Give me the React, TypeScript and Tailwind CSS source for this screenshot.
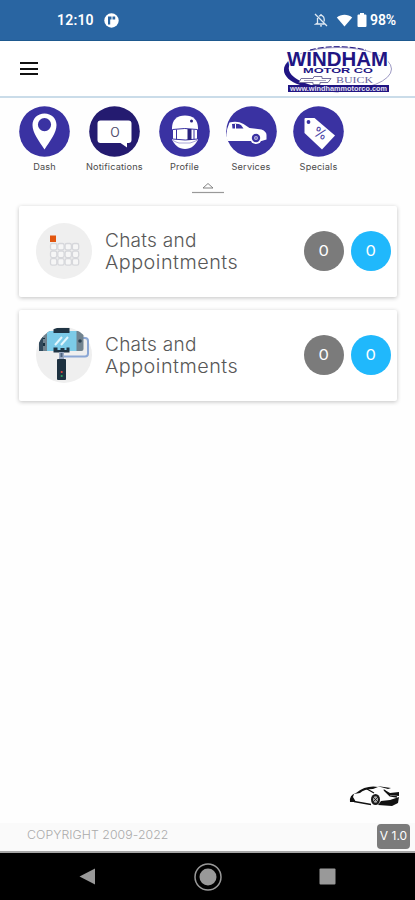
import type { ReactNode } from "react";

const NAVY = "#211583";

function StatusBar() {
  return (
    <div className="flex h-[41px] items-center border-b border-[#1e598f] bg-[#2965a2] pl-[57px] pr-[18px] font-['Roboto',sans-serif] text-white">
      <span className="w-[37px] text-[14px] font-semibold leading-none tracking-[0.2px]">12:10</span>
      <svg className="ml-[10px]" width="15" height="15" viewBox="0 0 15 15">
        <circle cx="7.5" cy="7.5" r="7.2" fill="#fff" />
        <path d="M4 3.500h3.500v3H6.200v5H4zM8.500 3.500h2.700v3H8.500z" fill="#2965a2" />
      </svg>
      <div className="ml-auto flex items-center">
        <svg width="14" height="14" viewBox="0 0 14 14" fill="none" stroke="#dfe9f3" strokeWidth="1.300">
          <path d="M1 1l12 12M3.500 5v5L2 11h8.500M5 3.200C7.500 1.500 10 3 10.200 6v2.500" />
          <path d="M6 12.800h2M7 1v1" />
        </svg>
        <svg className="ml-[8px]" width="17" height="13" viewBox="0 0 17 13">
          <path d="M.8 3.500C5-.2 12-.2 16.200 3.500L8.500 12.500z" fill="#fff" />
        </svg>
        <svg className="ml-[4px]" width="10" height="14" viewBox="0 0 10 14">
          <path d="M3 0h4v1.500h1.500q1 0 1 1V13q0 1-1 1h-7q-1 0-1-1V2.500q0-1 1-1H3z" fill="#fff" />
        </svg>
        <span className="ml-[3px] w-[27px] text-[14px] font-semibold leading-none tracking-[-0.1px]">98%</span>
      </div>
    </div>
  );
}

function DealerLogo() {
  return (
    <svg width="112" height="48" viewBox="0 0 112 48">
      <ellipse cx="56" cy="24" rx="53.500" ry="21.500" fill="#fff" stroke="#9e9ac4" strokeWidth="1" />
      <path d="M8 15C-4 24 3 35 18 40C32 44 46 48 60 47C42 44 20 39 12 32C5 26 5 20 12 15z" fill={NAVY} />
      <path d="M28 5C44 .5 66 .5 84 5" fill="none" stroke={NAVY} strokeWidth="1" strokeDasharray="6 2" />
      <g fontFamily="'Liberation Sans', Arial, sans-serif" fontWeight="700" fill={NAVY}>
        <text x="5" y="20.500" fontSize="19.500" textLength="101" lengthAdjust="spacingAndGlyphs" stroke="#fff" strokeWidth="2" paintOrder="stroke">WINDHAM</text>
        <text x="21" y="28.300" fontSize="7" textLength="70" lengthAdjust="spacingAndGlyphs">MOTOR CO</text>
      </g>
      <path d="M19 33.500h12l1-2h8v2h9l-3 4H38v2h-7v-2H17z" fill="#fff" stroke="#77729d" strokeWidth="1" />
      <path d="M22 35.500h22" stroke="#aaa7c4" />
      <text x="54" y="38" fontFamily="'Liberation Serif', serif" fontSize="9" fill="#64609a" textLength="37" lengthAdjust="spacingAndGlyphs">BUICK</text>
      <rect x="6" y="40" width="101" height="7" fill={NAVY} />
      <text x="8" y="45.500" fontFamily="'Liberation Sans', sans-serif" fontSize="6.500" fontWeight="700" fill="#e4e2f2" textLength="97" lengthAdjust="spacingAndGlyphs">www.windhammotorco.com</text>
    </svg>
  );
}

function Header() {
  return (
    <header className="flex h-[57px] items-center justify-between border-b-2 border-[#cadce9] bg-white pl-5 pr-[21px]">
      <div className="flex w-[18px] flex-col gap-[3.5px]">
        <span className="h-[2px] bg-[#111]" />
        <span className="h-[2px] bg-[#111]" />
        <span className="h-[2px] bg-[#111]" />
      </div>
      <DealerLogo />
    </header>
  );
}

type NavEntry = { label: string; color: string; cell: string; art: ReactNode };

const entries: NavEntry[] = [
  {
    label: "Dash",
    color: "#3a32a2",
    cell: "w-[51px]",
    art: (
      <path fillRule="evenodd" fill="#fff" d="M25.500 7.500C18.500 7.500 13.500 12.500 13.500 19C13.500 27 20 35 25.500 43.500C31 35 37.500 27 37.500 19C37.500 12.500 32.500 7.500 25.500 7.500zM25.500 12a6.600 6.600 0 1 1 0 13.200a6.600 6.600 0 1 1 0-13.200z" />
    ),
  },
  {
    label: "Notifications",
    color: "#241b70",
    cell: "w-[57px]",
    art: (
      <>
        <path fill="#fff" d="M11.500 14.500h28q3 0 3 3v16.500q0 3-3 3H38v4.500L31.500 37h-20q-3 0-3-3V17.500q0-3 3-3z" />
        <text x="21" y="30.500" fontSize="13.500" fontFamily="Inter, sans-serif" fontWeight="300" fill="#4d4968" textLength="10" lengthAdjust="spacingAndGlyphs">0</text>
      </>
    ),
  },
  {
    label: "Profile",
    color: "#3a32a2",
    cell: "w-[51px]",
    art: (
      <>
        <path fill="#fff" d="M13 22C13 14 18 9.500 26 9.500S39 14 39 22v11C37 39 32 43 26 43S15 39 13 33z" />
        <path d="M13 34l4 2 3 1h11l3-1 5-2" fill="none" stroke="#aaa6d8" strokeWidth="1" />
        <path d="M13.500 23.500q12-2 25 0v9.500q-12 2-25 0z" fill="#fff" stroke="#3a32a2" strokeWidth="1" />
        <path d="M17.500 23.500v10M35 23.500v10" stroke="#3a32a2" strokeWidth="1" />
        <path d="M28.500 23h4v11h-4z" fill="#28217d" />
        <circle cx="32.500" cy="15" r="1.500" fill="#28217d" />
      </>
    ),
  },
  {
    label: "Services",
    color: "#3a32a2",
    cell: "w-[51px]",
    art: (
      <>
        <path fill="#fff" d="M3.500 16.500q8-2 14 1.500l6 4 12 1.500q5 2 5 5.500v4.500l-5 1.500H1.500Q-1 26 3.500 16.500z" />
        <path d="M6 18q6-1 9 1l2.500 3.500H6.500z" fill="#3a32a2" />
        <path d="M9.500 18v5" stroke="#fff" />
        <circle cx="30" cy="32" r="6" fill="#fff" />
        <circle cx="30" cy="32" r="4.200" fill="#3a32a2" />
        <circle cx="30" cy="32" r="2" fill="#b9b5df" />
        <circle cx="30" cy="32" r=".8" fill="#3a32a2" />
      </>
    ),
  },
  {
    label: "Specials",
    color: "#3a32a2",
    cell: "w-[51px]",
    art: (
      <>
        <path fill="#fff" d="M12.500 12h9L42 29.500 29 43.500 11.500 27V13q0-1 1-1z" />
        <circle cx="15.500" cy="16" r="1.900" fill="#3a32a2" />
        <text x="27" y="32" transform="rotate(22 27 28)" textAnchor="middle" fontSize="14" fontFamily="Inter, sans-serif" fill="#4942a5">%</text>
      </>
    ),
  },
];

function QuickNav() {
  return (
    <nav className="flex h-[84px] gap-4 pl-[19px] pt-[8px]">
      {entries.map((e) => (
        <div key={e.label} className={`flex shrink-0 flex-col items-center ${e.cell}`}>
          <svg width="51" height="51" viewBox="0 0 51 51">
            <circle cx="25.500" cy="25.500" r="25.300" fill={e.color} />
            {e.art}
          </svg>
          <span className="mt-[5px] scale-x-[1.08] whitespace-nowrap text-[8.500px] leading-[11px] tracking-[0.15px] text-[#4b4b4b]">{e.label}</span>
        </div>
      ))}
    </nav>
  );
}

function CalendarArt() {
  const cells = [0, 1, 2].flatMap((r) => [0, 1, 2, 3].map((c) => [c, r]));
  return (
    <svg width="56" height="56" viewBox="0 0 56 56">
      <circle cx="28" cy="28" r="28" fill="#efefef" />
      {cells.map(([c, r]) => (
        <rect key={`${c}-${r}`} x={14.500 + c * 7.300} y={20.500 + r * 7.600} width="6.300" height="6.500" rx="1.800" fill="#f6f6f6" stroke="#d6d7db" strokeWidth="1.300" />
      ))}
      <rect x="14" y="12.500" width="6" height="6.500" fill="#e2560f" />
    </svg>
  );
}

function SelfieStickArt() {
  return (
    <svg width="56" height="56" viewBox="0 0 56 56">
      <defs>
        <clipPath id="disc">
          <circle cx="28" cy="28" r="28" />
        </clipPath>
      </defs>
      <circle cx="28" cy="28" r="28" fill="#efefef" />
      <path d="M47 11h2q3 0 3 3v12.500q0 3-3 3H26" fill="none" stroke="#8ba7d5" strokeWidth="2" />
      <g clipPath="url(#disc)">
        <rect x="4" y="4" width="43.500" height="20" rx="2" fill="#71838f" />
        <path d="M3 5h4v19H3z" fill="#32495b" />
        <rect x="11" y="4" width="29.500" height="20" fill="#7ccbe8" />
        <path d="M19 18l7-8M25 18l7-8" stroke="#e1f6fd" strokeWidth="2" />
        <path d="M8 11v1M8 16v3" stroke="#18303f" strokeWidth="2" />
        <circle cx="44" cy="14" r="1.800" fill="#2d4253" />
        <rect x="17.500" y="1" width="16" height="5" fill="#203544" />
        <path d="M17.500 20.500h4V23h3v-2h4v2h2v-2.500h3v5h-16z" fill="#203544" />
      </g>
      <path d="M25.500 25v7" stroke="#9aa9c2" strokeWidth="5" />
      <path d="M25.500 26v4" stroke="#4d627e" strokeWidth="2" />
      <rect x="21" y="32" width="9" height="21" rx="1" fill="#1d3140" />
      <circle cx="25.700" cy="45" r="1.100" fill="#e4453b" />
      <circle cx="25.700" cy="49" r="1.100" fill="#32a261" />
    </svg>
  );
}

function Count({ tone }: { tone: string }) {
  return (
    <span className={`flex size-[40px] items-center justify-center rounded-full ${tone}`}>
      <span className="scale-x-110">0</span>
    </span>
  );
}

function Card({ art }: { art: ReactNode }) {
  return (
    <section className="flex h-[91px] items-center rounded-[2px] bg-white pb-px pl-[17px] pr-[6px] shadow-[0_1px_4px_rgba(0,0,0,0.24)]">
      {art}
      <h2 className="ml-[13px] text-[18.500px] font-light leading-[22.500px] text-[#585858]">
        <span className="block origin-left scale-x-[1.03] tracking-[0.250px]">Chats and</span>
        <span className="block origin-left scale-x-[1.070] tracking-[0.450px]">Appointments</span>
      </h2>
      <div className="ml-auto flex gap-[7px] text-[15px] text-white">
        <Count tone="bg-[#7b7b7b]" />
        <Count tone="bg-[#20b8fc]" />
      </div>
    </section>
  );
}

function SportsCar() {
  return (
    <svg width="52" height="22" viewBox="0 0 52 22">
      <path d="M1 17Q0 10 7 8Q17 0 29 2L24 4Q15 4 11 8L5 9 4 12l3 5zM28 1l14 2-3 1zM34 4l7 4 9-1v4l-10-1zM29 20l3-4 9-1 9-3-1 6-6 3z" fill="#111" />
      <path d="M5 16.500l17 3M18 4l7 4M35 5l6 6 7 1" fill="none" stroke="#111" strokeWidth="1.300" />
      <ellipse cx="26.500" cy="14.500" rx="4.500" ry="5.500" fill="#191919" />
      <ellipse cx="26.500" cy="14.500" rx="2.500" ry="3.300" fill="#aaa" />
      <path d="M24 12l5 5M29 12l-5 5" stroke="#111" strokeWidth=".8" />
    </svg>
  );
}

export default function App() {
  return (
    <div className="flex h-[900px] w-[415px] flex-col overflow-hidden bg-[#fefefe] font-['Inter','Open_Sans',sans-serif]">
      <StatusBar />
      <Header />
      <QuickNav />
      <div className="flex h-[24px] justify-center">
        <svg width="32" height="12" viewBox="0 0 32 12" fill="none" stroke="#777">
          <path d="M11 6L16 1.500 21 6z" strokeWidth=".9" />
          <path d="M0 10.500h32" strokeWidth="1.200" stroke="#999" />
        </svg>
      </div>
      <main className="flex flex-1 flex-col gap-[13px] pl-[19px] pr-[18px]">
        <Card art={<CalendarArt />} />
        <Card art={<SelfieStickArt />} />
      </main>
      <div className="flex h-[38px] justify-end pr-[14px]">
        <SportsCar />
      </div>
      <footer className="flex h-[30px] items-center justify-between border-b-2 border-[#a6a6a6] bg-[#fafafa] pb-[2px] pl-[27px] pr-[5px]">
        <span className="origin-left scale-x-[1.07] whitespace-nowrap text-[11.500px] font-light leading-none tracking-[0.050px] text-[#aaa]">COPYRIGHT 2009-2022</span>
        <span className="flex h-[25px] w-[33px] shrink-0 items-center justify-center whitespace-nowrap rounded-[4px] bg-[#7b7b7b] text-[12px] text-white">V 1.0</span>
      </footer>
      <div className="flex h-[47px] items-center bg-black pl-[79px] pr-[79px]">
        <svg width="17" height="17" viewBox="0 0 17 17">
          <path d="M.5 8.500L16 .5v16z" fill="#999" />
        </svg>
        <svg className="ml-[98px]" width="28" height="28" viewBox="0 0 28 28">
          <circle cx="14" cy="14" r="13" fill="none" stroke="#999" strokeWidth="1.500" />
          <circle cx="14" cy="14" r="8.500" fill="#999" />
        </svg>
        <svg className="ml-auto" width="17" height="17" viewBox="0 0 17 17">
          <rect x=".5" y=".5" width="16" height="16" rx="1" fill="#999" />
        </svg>
      </div>
    </div>
  );
}
